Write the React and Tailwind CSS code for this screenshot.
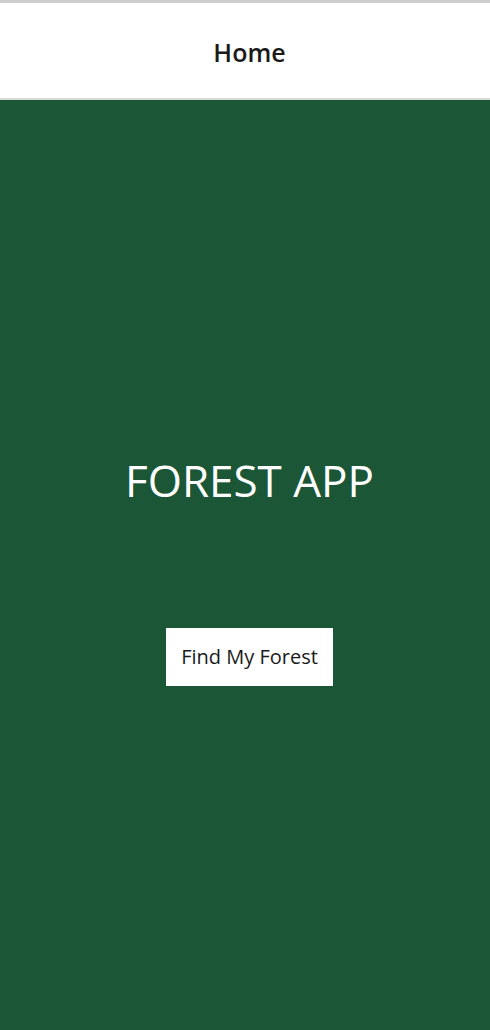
const App = () => {
  return (
    <div className="min-h-[1030px] flex flex-col font-['Open_Sans','Noto_Sans',sans-serif]">
      <header className="h-[100px] bg-white border-t-[3px] border-t-[#cdcdcd] border-b-2 border-b-[#d9d9d9] flex items-center justify-center pl-[9px] pt-[3px]">
        <h1 className="text-[25px] font-semibold text-[#1a1a1a] leading-none">Home</h1>
      </header>
      <main className="flex-1 bg-[#1b5637] flex flex-col items-center pt-[350px] pl-[9px]">
        <h2 className="text-[44px] leading-[60px] text-white">FOREST APP</h2>
        <button className="mt-[118px] w-[167px] h-[58px] bg-white text-[20px] text-[#1a1a1a]">
          Find My Forest
        </button>
      </main>
    </div>
  );
};

export default App;
